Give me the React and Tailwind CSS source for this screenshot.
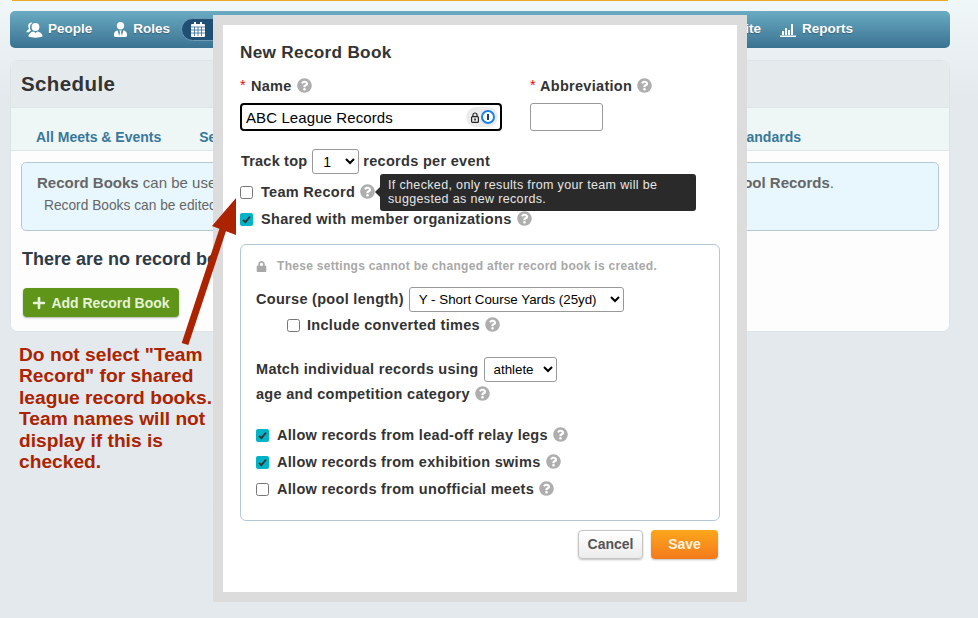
import React from 'react';
import { FaQuestionCircle, FaLock, FaUserTie, FaPlus } from 'react-icons/fa';

function Help({ className = '' }) {
    return <FaQuestionCircle className={`inline-block text-[#aeaeae] text-[15px] shrink-0 -mt-[1px] ${className}`} />;
}

function PeopleIcon() {
    return (
        <svg width="17" height="16" viewBox="0 0 17 16" fill="#fff" className="shrink-0">
            <path d="M5.5 0.5c-2 0-3.3 1.5-3.3 3.5 0 1.2.5 2.3 1.2 3C2 7.8.5 8.6.3 10.3H3c.5-.9 1.3-1.5 2-1.9-.8-1-1.2-2.3-1.1-3.7.1-1.6 1-3 2.5-3.7-.3-.3-.6-.5-.9-.5z" />
            <circle cx="9.5" cy="5" r="3.9" />
            <path d="M7.6 9.4 9.5 11l1.9-1.6c2.6.6 4.8 2 5.3 4.9-2 1-4.500 1.400-7.200 1.400s-5.200-.4-7.200-1.400c.5-2.900 2.700-4.300 5.300-4.900z" />
        </svg>
    );
}

function CalendarIcon() {
    return (
        <svg width="14" height="15" viewBox="0 0 14 15" className="shrink-0">
            <rect x="0" y="2" width="14" height="13" rx="1" fill="#fff" />
            <rect x="3" y="0" width="2" height="4" fill="#fff" />
            <rect x="9" y="0" width="2" height="4" fill="#fff" />
            <path d="M0 5h14M0 8h14M0 11h14M3.500 5v9M7 5v9M10.500 5v9" stroke="#2f6a8f" strokeWidth="0.8" fill="none" />
        </svg>
    );
}

function ReportsIcon() {
    return (
        <svg width="16" height="14" viewBox="0 0 16 14" fill="#fff" className="shrink-0">
            <rect x="2" y="8" width="2" height="4" />
            <rect x="5" y="5" width="2" height="7" />
            <rect x="8" y="7" width="2" height="5" />
            <rect x="11" y="1" width="2" height="11" />
            <rect x="0" y="12.500" width="16" height="1.500" />
        </svg>
    );
}

function Checkbox({ checked }) {
    if (!checked) return <input type="checkbox" className="w-[13px] h-[13px] m-0 shrink-0" />;
    return (
        <span className="relative w-[13px] h-[13px] shrink-0 flex">
            <input type="checkbox" defaultChecked className="appearance-none w-[13px] h-[13px] m-0 rounded-[2px] bg-[#00b4c8]" />
            <svg className="absolute left-[2px] top-[2px] pointer-events-none" width="9" height="9" viewBox="0 0 9 9" fill="none">
                <path d="M1 4.800 3.300 7.200 8 1.500" stroke="#333" strokeWidth="1.900" />
            </svg>
        </span>
    );
}

function CheckRow({ label, checked, className = '', labelClass = 'ml-[8px]' }) {
    return (
        <div className={`flex items-center ${className}`}>
            <Checkbox checked={checked} />
            <span className={`pt-[1px] ${labelClass}`}>{label}</span>
            <Help className="ml-[5px]" />
        </div>
    );
}

function TopPage() {
    return (
        <div className="pl-[10px] w-[950px]">
            <div className="h-[1px] mx-[2px] bg-[#eca828]" />
            <nav className="mt-[10px] h-[37px] rounded-[5px] bg-gradient-to-b from-[#6aabc2] to-[#3a7292] flex items-center pl-[16px] pr-[97px] text-white font-bold text-[13.500px] [text-shadow:0_1px_1px_rgba(0,0,0,0.3)]">
                <PeopleIcon />
                <span className="ml-[5px]">People</span>
                <FaUserTie className="text-[15px] ml-[21px]" />
                <span className="ml-[5px]">Roles</span>
                <div className="ml-[11px] h-[23px] w-[80px] rounded-full bg-[#1f4f75] border border-[#6f9ab3] flex items-center pl-[9px]">
                    <CalendarIcon />
                </div>
                <span className="ml-auto">Website</span>
                <span className="ml-[19px]"><ReportsIcon /></span>
                <span className="ml-[6px]">Reports</span>
            </nav>
            <section className="mt-[12px] h-[272px] rounded-[8px] border border-[#dde4e8] bg-white overflow-hidden flex flex-col">
                <div className="h-[47px] bg-[#e5eaed] flex items-center pl-[10px] pt-[1px] border-b border-[#dfe6ea]">
                    <h1 className="text-[20.500px] font-bold text-[#333] tracking-[0.4px]">Schedule</h1>
                </div>
                <div className="h-[43px] bg-[#eef6f6] border-b border-[#dde5e8] flex items-end pb-[2px] pl-[25px] pr-[148px] text-[14px] font-bold text-[#38789a]">
                    <span>All Meets &amp; Events</span>
                    <span className="ml-[38px]">Seasons</span>
                    <span className="ml-auto">Time Standards</span>
                </div>
                <div className="flex-1 bg-[#fdfdfd] px-[10px] pt-[11px]">
                    <div className="h-[69px] rounded-[5px] border border-[#b3c7d6] bg-[#e8f7fe] pl-[15px] text-[15px] text-[#666] pt-[9px]">
                        <div className="w-[797px] flex justify-between">
                            <span><b>Record Books</b> can be used to track</span>
                            <span><b>Pool Records</b>.</span>
                        </div>
                        <div className="mt-[1px] pl-[7px] text-[13.750px]">Record Books can be edited</div>
                    </div>
                    <p className="mt-[15px] pl-[1px] text-[18px] font-bold text-[#2f3b46]">There are no record books.</p>
                    <button className="mt-[15px] ml-[2px] w-[156px] h-[29px] pt-[1px] rounded-[4px] bg-[#5f9619] shadow-[0_1px_2px_rgba(0,0,0,0.3)] flex items-center justify-center text-[14px] font-bold text-[#e6f3d6]">
                        <FaPlus className="text-[14px] mr-[5px]" />
                        Add Record Book
                    </button>
                </div>
            </section>
        </div>
    );
}

function Modal() {
    return (
        <div className="absolute left-[213px] top-[15px] w-[534px] h-[587px] border-[10px] border-[#dcdcdc] bg-white text-[14.500px] font-bold text-[#333] pl-[17px] tracking-[0.3px]">
            <h2 className="mt-[17px] h-[20px] leading-[20px] text-[17.200px]">New Record Book</h2>
            <div className="mt-[14px] flex">
                <div className="w-[290px]">
                    <div className="h-[20px] flex items-center">
                        <span className="text-red-600 mr-[5px] font-normal">*</span><span className="pt-[1px]">Name</span><Help className="ml-[5px]" />
                    </div>
                    <div className="relative mt-[7px] w-[262px]">
                        <input readOnly value="ABC League Records" className="w-full h-[28px] border-2 border-black rounded-[4px] pl-[4px] text-[15px] tracking-[0.1px] font-normal text-black outline-none" />
                        <div className="absolute right-[4px] top-[4px] h-[20px] w-[32px] rounded-full bg-[#ececec] flex items-center pl-[5px] gap-[2px]">
                            <svg width="8" height="11" viewBox="0 0 8 11" fill="none" className="shrink-0">
                                <path d="M2 5V3a2 2 0 0 1 4 0v2" stroke="#222" strokeWidth="1.200" />
                                <rect x="0.600" y="4.600" width="6.800" height="5.800" rx="1" stroke="#222" strokeWidth="1.200" />
                                <rect x="3.200" y="6.500" width="1.600" height="2" fill="#222" />
                            </svg>
                            <span className="w-[14px] h-[14px] rounded-full border-2 border-[#1a80e8] bg-white flex items-center justify-center">
                                <span className="w-[2px] h-[6px] bg-[#16406f]" />
                            </span>
                        </div>
                    </div>
                </div>
                <div>
                    <div className="h-[20px] flex items-center">
                        <span className="text-red-600 mr-[4px] font-normal">*</span><span className="pt-[1px]">Abbreviation</span><Help className="ml-[5px]" />
                    </div>
                    <input readOnly className="mt-[7px] w-[73px] h-[28px] border border-[#999] rounded-[3px]" />
                </div>
            </div>
            <div className="mt-[18px] ml-[1px] h-[25px] flex items-center tracking-[0.2px]">
                Track top
                <select defaultValue="1" className="ml-[5px] mr-[4px] w-[47px] h-[25px] border border-[#999] rounded-[3px] pl-[6px] text-[14px] tracking-normal font-normal text-black">
                    <option>1</option>
                    <option>3</option>
                </select>
                <span className="tracking-[0.3px]">records per event</span>
            </div>
            <CheckRow label="Team Record" className="mt-[7px] h-[22px]" />
            <CheckRow label="Shared with member organizations" checked className="mt-[5px] h-[22px]" />

            <div className="mt-[14px] w-[480px] h-[277px] rounded-[6px] border border-[#b3c7d6] pl-[15px] pt-[12px]">
                <div className="h-[18px] flex items-center text-[12px] text-[#a8a8a8]">
                    <FaLock className="text-[11px]" />
                    <span className="ml-[10px]">These settings cannot be changed after record book is created.</span>
                </div>
                <div className="mt-[12px] h-[25px] flex items-center">
                    Course (pool length)
                    <select className="ml-[5px] w-[215px] h-[25px] border border-[#999] rounded-[3px] pl-[5px] text-[13.330px] tracking-normal font-normal text-black">
                        <option>Y - Short Course Yards (25yd)</option>
                    </select>
                </div>
                <CheckRow label="Include converted times" className="mt-[2px] ml-[31px] h-[22px]" labelClass="ml-[7px]" />
                <div className="mt-[21px] h-[25px] flex items-center">
                    Match individual records using
                    <select className="ml-[5px] w-[73px] h-[25px] border border-[#999] rounded-[3px] pl-[5px] text-[13.330px] tracking-normal font-normal text-black">
                        <option>athlete</option>
                    </select>
                </div>
                <div className="h-[24px] flex items-center">
                    <span className="pt-[1px]">age and competition category</span><Help className="ml-[5px]" />
                </div>
                <CheckRow label="Allow records from lead-off relay legs" checked className="mt-[18px] h-[22px]" />
                <CheckRow label="Allow records from exhibition swims" checked className="mt-[5px] h-[22px]" />
                <CheckRow label="Allow records from unofficial meets" className="mt-[5px] h-[22px]" />
            </div>
            <div className="mt-[9px] w-[478px] flex justify-end gap-[8px] text-[14px] tracking-normal">
                <button className="w-[65px] h-[29px] rounded-[4px] border border-[#c4c4c4] bg-gradient-to-b from-white to-[#ececec] text-[#555] shadow-[0_1px_2px_rgba(0,0,0,0.25)]">Cancel</button>
                <button className="w-[67px] h-[29px] rounded-[4px] bg-gradient-to-b from-[#fba61c] to-[#f4791b] text-[#fff3e0] shadow-[0_1px_2px_rgba(0,0,0,0.25)]">Save</button>
            </div>

            <div className="absolute left-[157px] top-[149px] w-[316px] h-[37px] rounded-[3px] bg-[#2a2a2a] text-[#e6e6e6] text-[12.500px] leading-[14px] pl-[8px] pt-[4px] tracking-[0.35px] font-normal">
                <span className="absolute left-[-5px] top-[13px] w-0 h-0 border-y-[5px] border-y-transparent border-r-[5px] border-r-[#2a2a2a]" />
                If checked, only results from your team will be<br />suggested as new records.
            </div>
        </div>
    );
}

export default function App() {
    return (
        <div className="relative w-[978px] h-[618px] overflow-hidden bg-gradient-to-b from-[#f0f7f8] to-[#e4e9ed] to-[100px] font-['Liberation_Sans',Arial,sans-serif]">
            <TopPage />
            <Modal />
            <div className="absolute left-[19px] top-[344px] text-[19.200px] leading-[21.400px] font-bold text-[#ab2300]">
                Do not select "Team<br />Record" for shared<br />league record books.<br />Team names will not<br />display if this is<br />checked.
            </div>
            <svg className="absolute left-0 top-0 pointer-events-none" width="978" height="618" viewBox="0 0 978 618">
                <polygon points="236,198 212,226 236,235" fill="#ab2300" />
                <line x1="185" y1="344" x2="224" y2="226" stroke="#ab2300" strokeWidth="7" />
            </svg>
        </div>
    );
}
